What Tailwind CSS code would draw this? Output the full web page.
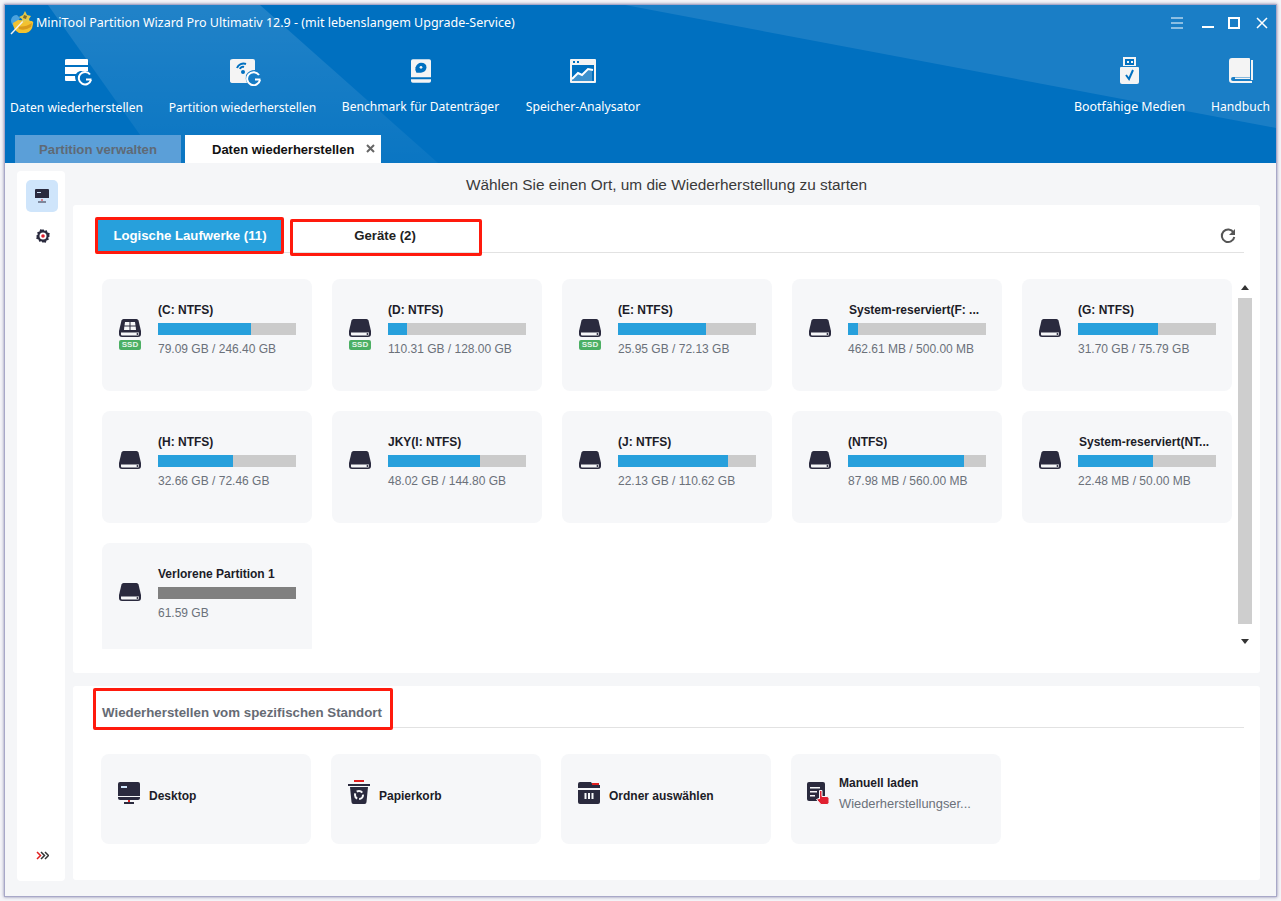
<!DOCTYPE html>
<html lang="de">
<head>
    <meta charset="UTF-8">
    <title>MiniTool Partition Wizard</title>
    <script src="https://cdn.jsdelivr.net/npm/@tailwindcss/browser@4"></script>
</head>
<body class="w-[1281px] h-[901px] overflow-hidden bg-[#f4f4f8] font-['Liberation_Sans',Arial,sans-serif]">
    <svg class="hidden">
        <symbol id="drive" viewBox="0 0 22 18">
            <path d="M4.500 0h13q1.500 0 2 1.500l2.500 10.500v3q0 3-3 3H3q-3 0-3-3v-3L2.500 1.500Q3 0 4.500 0z" fill="#2a2a3e"/>
            <path d="M2 13.500h18v2q0 1-1 1H3q-1 0-1-1z" fill="#f6f7f9"/>
            <circle cx="18.500" cy="15" r="1" fill="#2a2a3e"/>
        </symbol>
        <symbol id="refresh-g" viewBox="0 0 16 16">
            <path d="M13.500 4.500A6.300 6.300 0 1 0 14.300 9" fill="none" stroke="currentColor" stroke-width="2"/>
            <path d="M15 1v6H9z" fill="currentColor"/>
        </symbol>
    </svg>

    <div class="ml-1 mt-1 w-[1273px] h-[893px] border border-[#a8a8c8] shadow-[0_0_3px_#8888aa] bg-[#f5f6f8] flex flex-col">
        <!-- Kopfbereich -->
        <header class="relative h-[158px] bg-[#0070c0] overflow-hidden text-white shrink-0">
            <svg class="absolute inset-0" width="1271" height="158">
                <defs>
                    <linearGradient id="band" x1="0" y1="0" x2="0" y2="1">
                        <stop offset="0" stop-color="#fff" stop-opacity="0.13"/>
                        <stop offset="1" stop-color="#fff" stop-opacity="0.04"/>
                    </linearGradient>
                </defs>
                <polygon points="43,0 255,0 433,158 155,158" fill="url(#band)"/>
                <polygon points="620,0 1271,0 1271,123" fill="#ffffff" fill-opacity="0.1"/>
            </svg>

            <div class="relative flex items-center h-[36px] pl-[5px]">
                <svg width="24" height="24" viewBox="0 0 24 24" class="mt-[-1px]">
                    <path d="M1 9q1-5 6-5l3 3-5 9q-4-2-4-7z" fill="#4aa3df"/>
                    <path d="M3 12l5-3 14 1q2 1 1 3-1 8-7 9H9q-6-3-6-10z" fill="#f2c230"/>
                    <path d="M8 15q6 2 14-3l-1 4q-6 4-12 2z" fill="#d99a1c"/>
                    <path d="M1 23L16 7" stroke="#f2f2f2" stroke-width="1.500"/>
                    <path d="M15 0l2 4 4 1-2 3 1 3-4-1-3 2-1-4-3-2 4-2z" fill="#e4c94a"/>
                    <path d="M14 4l3 1-1 3-3-1z" fill="#7d6a2a"/>
                </svg>
                <span class="ml-[2px] text-[12.500px] font-['Noto_Sans'] whitespace-nowrap">MiniTool Partition Wizard Pro Ultimativ 12.9 - (mit lebenslangem Upgrade-Service)</span>
                <div class="ml-auto flex items-center mr-[8px]">
                    <svg width="12" height="12" viewBox="0 0 12 12" class="mr-[19px]"><path d="M0 1h12M0 6h12M0 11h12" stroke="#fff" stroke-width="1"/></svg>
                    <svg width="12" height="12" viewBox="0 0 12 12" class="mr-[14px]"><path d="M0 10h12" stroke="#fff" stroke-width="2"/></svg>
                    <svg width="12" height="12" viewBox="0 0 12 12" class="mr-[16px]"><rect x="1" y="1" width="10" height="10" fill="none" stroke="#fff" stroke-width="2"/></svg>
                    <svg width="12" height="12" viewBox="0 0 12 12"><path d="M1 1l10 10M11 1L1 11" stroke="#fff" stroke-width="1.500"/></svg>
                </div>
            </div>

            <nav class="relative flex h-[94px] pl-[5px] pr-[6px] text-[12.100px] font-['Noto_Sans']">
                <div class="w-[133px] flex flex-col items-center">
                    <svg width="28" height="27" viewBox="0 0 28 27" class="mt-[18px] ml-[5px]" fill="#fff">
                        <path d="M2 0h20q1 0 1 1v5H0V1q0-1 2-1zM0 8h23v4h-8q-3 1-4 3H0zM0 17h10q0 3 1 5H1q-1 0-1-1z"/>
                        <path d="M25 15.500A6.200 6.200 0 1 0 26 21" fill="none" stroke="#fff" stroke-width="2"/>
                        <path d="M26.500 19.500H21v2h5.500z"/>
                    </svg>
                    <span class="mt-[13px] whitespace-nowrap">Daten wiederherstellen</span>
                </div>
                <div class="ml-[26px] w-[147px] flex flex-col items-center">
                    <svg width="31" height="27" viewBox="0 0 31 27" class="mt-[18px] ml-[5px]">
                        <path d="M3 0h20q2 0 2 2v9q-6 0-9 5-1 4 1 8H3q-3 0-3-2V2q0-2 3-2z" fill="#f4f4f4"/>
                        <path d="M7 9a7 7 0 0 1 9-4M10 10a3 3 0 0 1 4-2" fill="none" stroke="#0070c0" stroke-width="2"/>
                        <circle cx="13" cy="13" r="2" fill="#0070c0"/>
                        <path d="M29 16A6.500 6.500 0 1 0 30 21" fill="none" stroke="#fff" stroke-width="2"/>
                        <path d="M30.500 19.500H25v2h5.500z" fill="#fff"/>
                    </svg>
                    <span class="mt-[13px] whitespace-nowrap">Partition wiederherstellen</span>
                </div>
                <div class="ml-[26px] w-[157px] flex flex-col items-center">
                    <svg width="20" height="26" viewBox="0 0 22 26" class="mt-[17px]">
                        <path d="M2 0h18q2 0 2 2v18H0V2q0-2 2-2zM0 22h22v2q0 2-2 2H2q-2 0-2-2z" fill="#f4f4f4"/>
                        <path d="M6 15q-2-3-1-6 2-5 6-5 6 0 6 5t-6 6z" fill="#0070c0"/>
                        <circle cx="11" cy="9" r="1.500" fill="#f4f4f4"/>
                    </svg>
                    <span class="mt-[14px] whitespace-nowrap">Benchmark für Datenträger</span>
                </div>
                <div class="ml-[26px] w-[116px] flex flex-col items-center">
                    <svg width="26" height="24" viewBox="0 0 26 24" class="mt-[18px]">
                        <path d="M1 0h24q1 0 1 1v22q0 1-1 1H1q-1 0-1-1V1q0-1 1-1z" fill="#f4f4f4"/>
                        <path d="M2 6h22v16H2z" fill="#0070c0"/>
                        <path d="M3 2h2v2H3zM7 2h2v2H7z" fill="#0070c0"/>
                        <path d="M2 20l6-6 4 2 6-6 4 1v11H2z" fill="#f4f4f4" fill-opacity="0.25"/>
                        <path d="M2 20l6-6 4 2 6-6 5 1" fill="none" stroke="#fff" stroke-width="2"/>
                    </svg>
                    <span class="mt-[15px] text-[12.200px] whitespace-nowrap">Speicher-Analysator</span>
                </div>
                <div class="ml-auto w-[111px] flex flex-col items-center">
                    <svg width="19" height="27" viewBox="0 0 19 27" class="mt-[16px]">
                        <path d="M3 0h13v9H3z" fill="#f4f4f4"/>
                        <path d="M5 2h9v6H5z" fill="#0070c0"/>
                        <path d="M7 4h2v2H7zM11 4h2v2h-2z" fill="#f4f4f4"/>
                        <path d="M1 10h17q1 0 1 1v14q0 2-2 2H2q-2 0-2-2V11q0-1 1-1z" fill="#f4f4f4"/>
                        <path d="M6 18l3 4 4-9" fill="none" stroke="#0070c0" stroke-width="2"/>
                    </svg>
                    <span class="mt-[14px] text-[12.400px] whitespace-nowrap">Bootfähige Medien</span>
                </div>
                <div class="ml-[26px] w-[59px] flex flex-col items-center">
                    <svg width="24" height="26" viewBox="0 0 24 26" class="mt-[17px]">
                        <path d="M3 0h17q1 0 1 1v18H4q-2 0-2 2t2 2h19v2H3q-3 0-3-3V3q0-3 3-3z" fill="#f4f4f4"/>
                        <path d="M22 2h2v20h-2z" fill="#f4f4f4"/>
                        <path d="M6 19.500h15v1.500H6z" fill="#f4f4f4"/>
                    </svg>
                    <span class="mt-[14px] whitespace-nowrap">Handbuch</span>
                </div>
            </nav>

            <div class="relative flex h-[28px] pl-[10px] text-[13px] font-bold">
                <div class="w-[166px] bg-[#5b9fd8] text-[#5f6a76] text-[13.200px] pl-[24px] pt-[2px] flex items-center whitespace-nowrap">Partition verwalten</div>
                <div class="ml-[4px] w-[196px] bg-white text-[#111] pl-[27px] pt-[2px] flex items-center whitespace-nowrap">
                    Daten wiederherstellen
                    <svg width="9" height="9" viewBox="0 0 9 9" class="ml-[12px] mt-[-3px]"><path d="M1 1l7 7M8 1L1 8" stroke="#666" stroke-width="2"/></svg>
                </div>
            </div>
        </header>

        <!-- Inhalt -->
        <div class="flex flex-1 pl-[12px] pr-[16px] pt-[8px] pb-[15px] gap-[8px]">
            <aside class="w-[48px] bg-white rounded-[4px] flex flex-col items-center pt-[9px] pl-[2px]">
                <div class="w-[32px] h-[32px] rounded-[5px] bg-[#cfe5fb] flex items-center justify-center">
                    <svg width="14" height="14" viewBox="0 0 14 14">
                        <path d="M1 0h12q1 0 1 1v8H0V1q0-1 1-1z" fill="#2a2a3e"/>
                        <path d="M2 3h4v1H2z" fill="#cfe5fb"/>
                        <path d="M6.500 10h1v2h-1z" fill="#e02020"/>
                        <path d="M3 12.500h8v1H3z" fill="#2a2a3e"/>
                    </svg>
                </div>
                <svg width="14" height="14" viewBox="0 0 14 14" class="mt-[17px] ml-[1px]">
                    <path d="M7 0l1.500 1.800 2.300-.6.700 2.300 2.300.7-.6 2.300L14 7l-1.800 1.500.6 2.300-2.300.7-.7 2.300-2.300-.6L7 14l-1.500-1.800-2.300.6-.7-2.300-2.300-.7.6-2.300L0 7l1.800-1.500-.6-2.300 2.300-.7.7-2.300 2.300.6z" fill="#2a2a3e"/>
                    <circle cx="7" cy="7" r="3.500" fill="#fff"/>
                    <circle cx="7" cy="7" r="1.800" fill="#e02030"/>
                </svg>
                <svg width="13" height="9" viewBox="0 0 13 9" class="mt-auto mb-[21px]">
                    <path d="M1 1l3.500 3.500L1 8" fill="none" stroke="#e02020" stroke-width="1.500"/>
                    <path d="M5 1l3.500 3.500L5 8M9 1l3.500 3.500L9 8" fill="none" stroke="#333" stroke-width="1.500"/>
                </svg>
            </aside>

            <main class="w-[1187px] flex flex-col">
                <h1 class="h-[34px] text-center text-[15.400px] leading-[28px] text-[#3a3a3a]">Wählen Sie einen Ort, um die Wiederherstellung zu starten</h1>

                <section class="relative h-[468px] bg-white rounded-[3px]">
                    <div class="mt-[15px] ml-[25px] mr-[16px] h-[33px] flex border-b border-[#e2e2e2]">
                        <div class="w-[184px] h-[32px] bg-[#27a0dc] text-white text-[13.200px] font-bold flex items-center justify-center">Logische Laufwerke (11)</div>
                        <div class="w-[206px] h-[32px] text-[#222] text-[13.200px] font-bold flex items-center justify-center">Geräte (2)</div>
                        <svg width="16" height="16" class="ml-auto mr-[8px] mt-[8px] text-[#555]"><use href="#refresh-g"/></svg>
                    </div>

                    <div class="absolute top-[12px] left-[22px] w-[189px] h-[37px] border-[3px] border-[#ff1a0d] rounded-[2px]"></div>
                    <div class="absolute top-[14px] left-[217px] w-[192px] h-[37px] border-[3px] border-[#ff1a0d] rounded-[2px]"></div>

                    <div class="flex ml-[29px] mt-[26px]">
                        <div class="w-[1130px] h-[370px] overflow-hidden grid grid-cols-[repeat(5,210px)] auto-rows-[112px] gap-[20px]">
                            <div class="bg-[#f6f7f9] rounded-[8px] flex pl-[17px] pt-[23px]">
                                <div class="w-[22px] mt-[17px]">
                                    <svg width="22" height="18" viewBox="0 0 22 18">
                                        <use href="#drive"/>
                                        <path d="M6 3h4.500v3.500H5.500zM11.500 3H16l.5 3.500h-5zM5.300 7.500h5.200V11H5zM11.500 7.500h5.200L17 11h-5.500z" fill="#f6f7f9"/>
                                    </svg>
                                    <div class="mt-[3px] h-[10px] rounded-[2px] bg-[#4caf64] text-[#e6f5ea] text-[8px] font-bold leading-[10px] text-center">SSD</div>
                                </div>
                                <div class="ml-[17px] w-[138px]">
                                    <div class="text-[12px] font-bold text-[#1c1c28] leading-[16px] whitespace-nowrap">(C: NTFS)</div>
                                    <div class="mt-[5px] h-[12px] bg-[#cbcbcb]"><div class="h-full w-[93px] bg-[#27a0dc]"></div></div>
                                    <div class="mt-[6px] text-[12px] text-[#6b717a] leading-[16px] whitespace-nowrap">79.09 GB / 246.40 GB</div>
                                </div>
                            </div>
                            <div class="bg-[#f6f7f9] rounded-[8px] flex pl-[17px] pt-[23px]">
                                <div class="w-[22px] mt-[17px]">
                                    <svg width="22" height="18"><use href="#drive"/></svg>
                                    <div class="mt-[3px] h-[10px] rounded-[2px] bg-[#4caf64] text-[#e6f5ea] text-[8px] font-bold leading-[10px] text-center">SSD</div>
                                </div>
                                <div class="ml-[17px] w-[138px]">
                                    <div class="text-[12px] font-bold text-[#1c1c28] leading-[16px] whitespace-nowrap">(D: NTFS)</div>
                                    <div class="mt-[5px] h-[12px] bg-[#cbcbcb]"><div class="h-full w-[19px] bg-[#27a0dc]"></div></div>
                                    <div class="mt-[6px] text-[12px] text-[#6b717a] leading-[16px] whitespace-nowrap">110.31 GB / 128.00 GB</div>
                                </div>
                            </div>
                            <div class="bg-[#f6f7f9] rounded-[8px] flex pl-[17px] pt-[23px]">
                                <div class="w-[22px] mt-[17px]">
                                    <svg width="22" height="18"><use href="#drive"/></svg>
                                    <div class="mt-[3px] h-[10px] rounded-[2px] bg-[#4caf64] text-[#e6f5ea] text-[8px] font-bold leading-[10px] text-center">SSD</div>
                                </div>
                                <div class="ml-[17px] w-[138px]">
                                    <div class="text-[12px] font-bold text-[#1c1c28] leading-[16px] whitespace-nowrap">(E: NTFS)</div>
                                    <div class="mt-[5px] h-[12px] bg-[#cbcbcb]"><div class="h-full w-[88px] bg-[#27a0dc]"></div></div>
                                    <div class="mt-[6px] text-[12px] text-[#6b717a] leading-[16px] whitespace-nowrap">25.95 GB / 72.13 GB</div>
                                </div>
                            </div>
                            <div class="bg-[#f6f7f9] rounded-[8px] flex pl-[17px] pt-[23px]">
                                <div class="w-[22px] mt-[17px]"><svg width="22" height="18"><use href="#drive"/></svg></div>
                                <div class="ml-[17px] w-[138px]">
                                    <div class="text-[12px] font-bold text-[#1c1c28] leading-[16px] whitespace-nowrap pl-[1px]">System-reserviert(F: ...</div>
                                    <div class="mt-[5px] h-[12px] bg-[#cbcbcb]"><div class="h-full w-[10px] bg-[#27a0dc]"></div></div>
                                    <div class="mt-[6px] text-[12px] text-[#6b717a] leading-[16px] whitespace-nowrap">462.61 MB / 500.00 MB</div>
                                </div>
                            </div>
                            <div class="bg-[#f6f7f9] rounded-[8px] flex pl-[17px] pt-[23px]">
                                <div class="w-[22px] mt-[17px]"><svg width="22" height="18"><use href="#drive"/></svg></div>
                                <div class="ml-[17px] w-[138px]">
                                    <div class="text-[12px] font-bold text-[#1c1c28] leading-[16px] whitespace-nowrap">(G: NTFS)</div>
                                    <div class="mt-[5px] h-[12px] bg-[#cbcbcb]"><div class="h-full w-[80px] bg-[#27a0dc]"></div></div>
                                    <div class="mt-[6px] text-[12px] text-[#6b717a] leading-[16px] whitespace-nowrap">31.70 GB / 75.79 GB</div>
                                </div>
                            </div>

                            <div class="bg-[#f6f7f9] rounded-[8px] flex pl-[17px] pt-[23px]">
                                <div class="w-[22px] mt-[17px]"><svg width="22" height="18"><use href="#drive"/></svg></div>
                                <div class="ml-[17px] w-[138px]">
                                    <div class="text-[12px] font-bold text-[#1c1c28] leading-[16px] whitespace-nowrap">(H: NTFS)</div>
                                    <div class="mt-[5px] h-[12px] bg-[#cbcbcb]"><div class="h-full w-[75px] bg-[#27a0dc]"></div></div>
                                    <div class="mt-[6px] text-[12px] text-[#6b717a] leading-[16px] whitespace-nowrap">32.66 GB / 72.46 GB</div>
                                </div>
                            </div>
                            <div class="bg-[#f6f7f9] rounded-[8px] flex pl-[17px] pt-[23px]">
                                <div class="w-[22px] mt-[17px]"><svg width="22" height="18"><use href="#drive"/></svg></div>
                                <div class="ml-[17px] w-[138px]">
                                    <div class="text-[12px] font-bold text-[#1c1c28] leading-[16px] whitespace-nowrap">JKY(I: NTFS)</div>
                                    <div class="mt-[5px] h-[12px] bg-[#cbcbcb]"><div class="h-full w-[92px] bg-[#27a0dc]"></div></div>
                                    <div class="mt-[6px] text-[12px] text-[#6b717a] leading-[16px] whitespace-nowrap">48.02 GB / 144.80 GB</div>
                                </div>
                            </div>
                            <div class="bg-[#f6f7f9] rounded-[8px] flex pl-[17px] pt-[23px]">
                                <div class="w-[22px] mt-[17px]"><svg width="22" height="18"><use href="#drive"/></svg></div>
                                <div class="ml-[17px] w-[138px]">
                                    <div class="text-[12px] font-bold text-[#1c1c28] leading-[16px] whitespace-nowrap">(J: NTFS)</div>
                                    <div class="mt-[5px] h-[12px] bg-[#cbcbcb]"><div class="h-full w-[110px] bg-[#27a0dc]"></div></div>
                                    <div class="mt-[6px] text-[12px] text-[#6b717a] leading-[16px] whitespace-nowrap">22.13 GB / 110.62 GB</div>
                                </div>
                            </div>
                            <div class="bg-[#f6f7f9] rounded-[8px] flex pl-[17px] pt-[23px]">
                                <div class="w-[22px] mt-[17px]"><svg width="22" height="18"><use href="#drive"/></svg></div>
                                <div class="ml-[17px] w-[138px]">
                                    <div class="text-[12px] font-bold text-[#1c1c28] leading-[16px] whitespace-nowrap">(NTFS)</div>
                                    <div class="mt-[5px] h-[12px] bg-[#cbcbcb]"><div class="h-full w-[116px] bg-[#27a0dc]"></div></div>
                                    <div class="mt-[6px] text-[12px] text-[#6b717a] leading-[16px] whitespace-nowrap">87.98 MB / 560.00 MB</div>
                                </div>
                            </div>
                            <div class="bg-[#f6f7f9] rounded-[8px] flex pl-[17px] pt-[23px]">
                                <div class="w-[22px] mt-[17px]"><svg width="22" height="18"><use href="#drive"/></svg></div>
                                <div class="ml-[17px] w-[138px]">
                                    <div class="text-[12px] font-bold text-[#1c1c28] leading-[16px] whitespace-nowrap pl-[1px]">System-reserviert(NT...</div>
                                    <div class="mt-[5px] h-[12px] bg-[#cbcbcb]"><div class="h-full w-[75px] bg-[#27a0dc]"></div></div>
                                    <div class="mt-[6px] text-[12px] text-[#6b717a] leading-[16px] whitespace-nowrap">22.48 MB / 50.00 MB</div>
                                </div>
                            </div>

                            <div class="bg-[#f6f7f9] rounded-[8px] flex pl-[17px] pt-[23px]">
                                <div class="w-[22px] mt-[17px]"><svg width="22" height="18"><use href="#drive"/></svg></div>
                                <div class="ml-[17px] w-[138px]">
                                    <div class="text-[12px] font-bold text-[#1c1c28] leading-[16px] whitespace-nowrap">Verlorene Partition 1</div>
                                    <div class="mt-[5px] h-[12px] bg-[#808080]"></div>
                                    <div class="mt-[6px] text-[12px] text-[#6b717a] leading-[16px] whitespace-nowrap">61.59 GB</div>
                                </div>
                            </div>
                        </div>

                        <div class="ml-[6px] w-[14px] h-[370px] flex flex-col items-center">
                            <svg width="8" height="5" viewBox="0 0 8 5" class="mt-[6px]"><path d="M4 0l4 5H0z" fill="#333"/></svg>
                            <div class="mt-[8px] w-full h-[326px] bg-[#cecece]"></div>
                            <svg width="8" height="5" viewBox="0 0 8 5" class="mt-[15px]"><path d="M0 0h8L4 5z" fill="#333"/></svg>
                        </div>
                    </div>
                </section>

                <section class="relative mt-[13px] h-[194px] bg-white rounded-[3px]">
                    <div class="ml-[25px] mr-[16px] h-[42px] border-b border-[#e2e2e2] pl-[4px] pt-[19px] text-[13.300px] leading-[16px] font-bold text-[#666b74]">Wiederherstellen vom spezifischen Standort</div>
                    <div class="absolute top-[2px] left-[20px] w-[300px] h-[42px] border-[3px] border-[#ff1a0d] rounded-[2px]"></div>

                    <div class="ml-[28px] mt-[26px] flex gap-[20px]">
                        <div class="w-[210px] h-[90px] bg-[#f6f7f9] rounded-[8px] flex pl-[17px] pt-[28px]">
                            <svg width="22" height="22" viewBox="0 0 22 22">
                                <path d="M2 0h18q2 0 2 2v12H0V2q0-2 2-2z" fill="#2a2a3e"/>
                                <path d="M3 4h6v2H3z" fill="#cfe5fb"/>
                                <path d="M0 15h22v1q0 2-2 2H2q-2 0-2-2z" fill="#2a2a3e"/>
                                <path d="M10 18h2v3h-2z" fill="#e02020"/>
                                <path d="M6 20h10v2H6z" fill="#2a2a3e"/>
                            </svg>
                            <span class="ml-[9px] mt-[6px] text-[12px] font-bold text-[#1c1c28] leading-[16px]">Desktop</span>
                        </div>
                        <div class="w-[210px] h-[90px] bg-[#f6f7f9] rounded-[8px] flex pl-[17px] pt-[26px]">
                            <svg width="22" height="24" viewBox="0 0 22 24">
                                <path d="M6 0h10v2H6z" fill="#e02020"/>
                                <path d="M0 4h22v2H0z" fill="#2a2a3e"/>
                                <path d="M2 7h18l-1.500 15q0 2-2 2h-11q-2 0-2-2z" fill="#2a2a3e"/>
                                <circle cx="11" cy="15" r="4" fill="none" stroke="#f6f7f9" stroke-width="2" stroke-dasharray="6 2"/>
                            </svg>
                            <span class="ml-[9px] mt-[8px] text-[12px] font-bold text-[#1c1c28] leading-[16px]">Papierkorb</span>
                        </div>
                        <div class="w-[210px] h-[90px] bg-[#f6f7f9] rounded-[8px] flex pl-[17px] pt-[28px]">
                            <svg width="22" height="22" viewBox="0 0 22 22">
                                <path d="M2 0h11l2 3h7v3H0V2q0-2 2-2z" fill="#2a2a3e"/>
                                <path d="M14 1h7v2h-7z" fill="#e02020"/>
                                <path d="M0 8h22v12q0 2-2 2H2q-2 0-2-2z" fill="#2a2a3e"/>
                                <path d="M10 11h2v6h-2zM6.500 11h2v6h-2zM13.500 11h2v6h-2z" fill="#f6f7f9"/>
                            </svg>
                            <span class="ml-[9px] mt-[6px] text-[12px] font-bold text-[#1c1c28] leading-[16px]">Ordner auswählen</span>
                        </div>
                        <div class="w-[210px] h-[90px] bg-[#f6f7f9] rounded-[8px] flex pl-[16px] pt-[21px]">
                            <svg width="23" height="23" viewBox="0 0 23 23" class="mt-[7px]">
                                <path d="M2 0h14q2 0 2 2v16q0 1-2 1H2q-2 0-2-2V2q0-2 2-2z" fill="#2a2a3e"/>
                                <path d="M3 5h10v1.500H3zM3 9h7v1.500H3zM3 13h5v1.500H3z" fill="#f6f7f9"/>
                                <path d="M12.500 8.500h2.500v6h5q2 0 2 2v4q0 2-2 2h-6l-4.500-5 2.500-1 .5 .5z" fill="#e02030" stroke="#f6f7f9" stroke-width="1"/>
                            </svg>
                            <div class="ml-[9px]">
                                <div class="text-[12px] font-bold text-[#1c1c28] leading-[16px]">Manuell laden</div>
                                <div class="mt-[5px] text-[12.900px] text-[#6b717a] leading-[16px] whitespace-nowrap">Wiederherstellungser...</div>
                            </div>
                        </div>
                    </div>
                </section>
            </main>
        </div>
    </div>
</body>
</html>
